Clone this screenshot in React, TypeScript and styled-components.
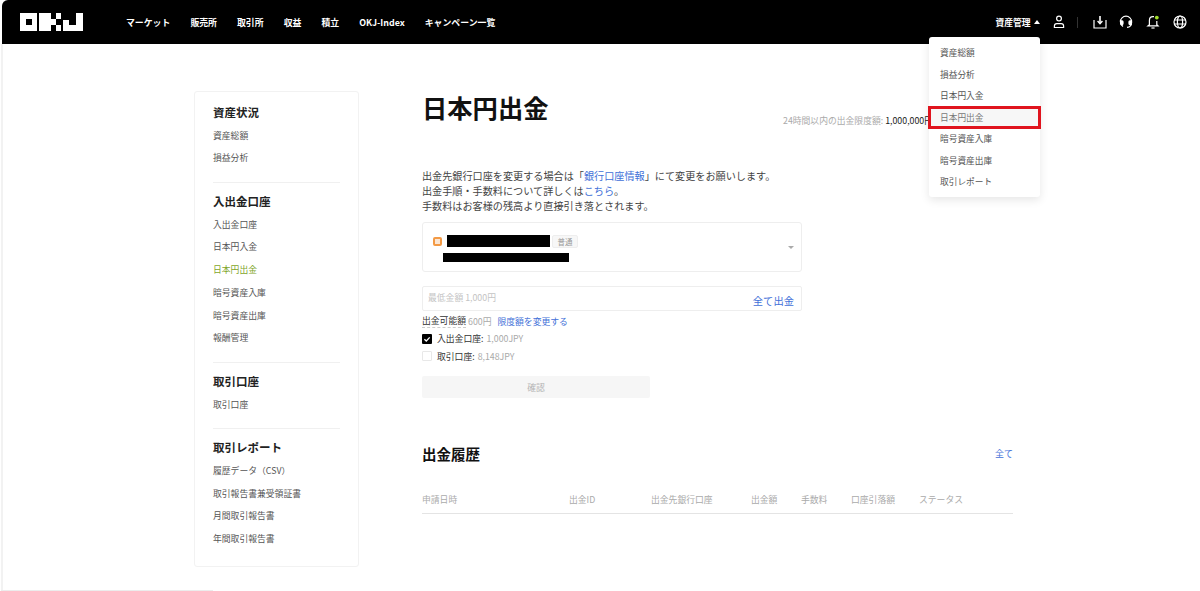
import React from 'react';
import styled, { createGlobalStyle } from 'styled-components';

const GlobalStyle = createGlobalStyle`
  html, body {
    margin: 0;
    padding: 0;
    background: #fff;
  }
  body {
    width: 1200px;
    height: 591px;
    overflow: hidden;
    font-family: "Noto Sans CJK JP", "Noto Sans", sans-serif;
    font-size: 9px;
    color: #333;
  }
  * {
    box-sizing: border-box;
  }
`;

const NAV_ITEMS = ['マーケット', '販売所', '取引所', '収益', '積立', 'OKJ-Index', 'キャンペーン一覧'];
const MENU_ITEMS = ['資産総額', '損益分析', '日本円入金', '日本円出金', '暗号資産入庫', '暗号資産出庫', '取引レポート'];
const SIDE_GROUPS = [
  { title: '資産状況', items: ['資産総額', '損益分析'] },
  { title: '入出金口座', items: ['入出金口座', '日本円入金', '日本円出金', '暗号資産入庫', '暗号資産出庫', '報酬管理'] },
  { title: '取引口座', items: ['取引口座'] },
  { title: '取引レポート', items: ['履歴データ（CSV）', '取引報告書兼受領証書', '月間取引報告書', '年間取引報告書'] },
];
const COLUMNS = ['申請日時', '出金ID', '出金先銀行口座', '出金額', '手数料', '口座引落額', 'ステータス'];

const Logo = () => (
  <LogoSvg viewBox="0 0 63 18" aria-label="OKJ">
    <path fill="#fff" fillRule="evenodd" d="M0 0h17v18H0zM6 6v6h6V6z" />
    <path fill="#fff" d="M19 0h12v18H19zM31 6h5v6h-5zM36 0h5v6h-5zM36 12h5v6h-5z" />
    <path fill="#fff" d="M56 0h7v18H43V7h6v5h7z" />
  </LogoSvg>
);

const UserIcon = () => (
  <IconSvg viewBox="0 0 14 14">
    <circle cx="7" cy="3.6" r="2.4" />
    <path d="M2.4 12.5h9.2v-1.4c0-1.4-1.2-2.4-2.4-2.4H4.8c-1.2 0-2.4 1-2.4 2.4z" />
  </IconSvg>
);

const DownloadIcon = () => (
  <IconSvg viewBox="0 0 14 14">
    <path d="M1 5v8h12V5" />
    <path d="M7 1v7" strokeWidth="1.6" />
    <path d="M4.6 6l2.4 2.6L9.4 6" strokeWidth="1.4" />
  </IconSvg>
);

const HeadsetIcon = () => (
  <IconSvg viewBox="0 0 14 14" strokeWidth="1.7">
    <path d="M4 11.4A5.7 5.7 0 0 1 1.4 6.8a5.6 5.6 0 0 1 11.2 0v.6c0 2.6-1.6 4.6-4.6 5" />
    <rect x="1.6" y="5.8" width="2.4" height="3.8" rx="1" fill="#fff" />
    <rect x="10" y="5.8" width="2.4" height="3.8" rx="1" fill="#fff" />
  </IconSvg>
);

const BellIcon = () => (
  <IconSvg viewBox="0 0 14 14" strokeWidth="1.4">
    <path d="M8 1.7H7C4.8 1.7 3.4 3.2 3.4 5.4v4.3L2 10.8h10l-1.2-1.1V6" />
    <path d="M5.4 13h3.2" />
    <circle cx="10.8" cy="2.6" r="1.9" fill="#9fdc2a" stroke="none" />
  </IconSvg>
);

const GlobeIcon = () => (
  <IconSvg viewBox="0 0 14 14" strokeWidth="1">
    <circle cx="7" cy="7" r="6" />
    <ellipse cx="7" cy="7" rx="2.6" ry="6" />
    <path d="M1 5h12M1 9h12" />
  </IconSvg>
);

const App = () => (
  <Frame>
    <GlobalStyle />
    <Header>
      <Logo />
      <Nav>
        {NAV_ITEMS.map((item) => (
          <NavLink key={item}>{item}</NavLink>
        ))}
      </Nav>
      <HeaderTools>
        <AssetMenu>
          資産管理
          <Caret />
        </AssetMenu>
        <UserIcon />
        <ToolDivider />
        <IconRow>
          <DownloadIcon />
          <HeadsetIcon />
          <BellIcon />
          <GlobeIcon />
        </IconRow>
      </HeaderTools>
    </Header>

    <Dropdown>
      {MENU_ITEMS.map((item) => (
        <DropdownItem key={item} $current={item === '日本円出金'}>
          {item}
        </DropdownItem>
      ))}
    </Dropdown>

    <Page>
      <Sidebar>
        {SIDE_GROUPS.map((group) => (
          <SideGroup key={group.title}>
            <SideTitle>{group.title}</SideTitle>
            {group.items.map((item) => (
              <SideItem key={item} $active={group.title === '入出金口座' && item === '日本円出金'}>
                {item}
              </SideItem>
            ))}
          </SideGroup>
        ))}
      </Sidebar>

      <Main>
        <TitleRow>
          <Title>日本円出金</Title>
          <Limit>
            24時間以内の出金限度額: <LimitValue>1,000,000円</LimitValue>
          </Limit>
        </TitleRow>

        <Notice>
          出金先銀行口座を変更する場合は「<BlueText>銀行口座情報</BlueText>」にて変更をお願いします。
          <br />
          出金手順・手数料について詳しくは<BlueText>こちら</BlueText>。
          <br />
          手数料はお客様の残高より直接引き落とされます。
        </Notice>

        <BankSelect>
          <BankInfo>
            <BankTop>
              <BankIcon />
              <Redacted $width={103} $height={12} />
              <AccountTag>普通</AccountTag>
            </BankTop>
            <BankBottom>
              <Redacted $width={126} $height={9} />
            </BankBottom>
          </BankInfo>
          <SelectCaret />
        </BankSelect>

        <AmountField>
          <Placeholder>最低金額 1,000円</Placeholder>
          <AllButton>全て出金</AllButton>
        </AmountField>

        <AvailableRow>
          <AvailableLabel>出金可能額</AvailableLabel>
          <GreyText>600円</GreyText>
          <ChangeLink>限度額を変更する</ChangeLink>
        </AvailableRow>

        <CheckRow>
          <CheckBox $checked>
            <svg viewBox="0 0 10 10" width="10" height="10">
              <path d="M2.4 5.2l1.9 1.8 3.4-3.6" fill="none" stroke="#fff" strokeWidth="1.3" />
            </svg>
          </CheckBox>
          入出金口座: <GreyText>1,000JPY</GreyText>
        </CheckRow>
        <CheckRow>
          <CheckBox />
          取引口座: <GreyText>8,148JPY</GreyText>
        </CheckRow>

        <ConfirmButton>確認</ConfirmButton>

        <HistoryHead>
          <HistoryTitle>出金履歴</HistoryTitle>
          <HistoryLink>全て</HistoryLink>
        </HistoryHead>

        <TableHead>
          {COLUMNS.map((col) => (
            <span key={col}>{col}</span>
          ))}
        </TableHead>
      </Main>
    </Page>
  </Frame>
);

const Frame = styled.div`
  position: relative;
  width: 1200px;
  height: 591px;
  padding-left: 2px;
  overflow: hidden;
  background: #fff;

  &::before {
    content: '';
    position: absolute;
    left: 1px;
    top: 44px;
    bottom: 0;
    width: 2px;
    background: #f2f2f2;
  }

  &::after {
    content: '';
    position: absolute;
    left: 1px;
    bottom: 0;
    width: 212px;
    height: 1px;
    background: #ececec;
  }
`;

const Header = styled.header`
  display: flex;
  align-items: center;
  height: 44px;
  padding: 0 13px 0 18px;
  background: #000;
  border-top-left-radius: 6px;
  color: #fff;
`;

const LogoSvg = styled.svg`
  width: 63px;
  height: 18px;
  flex-shrink: 0;
`;

const Nav = styled.nav`
  display: flex;
  gap: 20px;
  margin-left: 43px;
`;

const NavLink = styled.a`
  font-size: 8.9px;
  font-weight: 700;
  color: #fff;
  white-space: nowrap;
`;

const HeaderTools = styled.div`
  display: flex;
  align-items: center;
  margin-left: auto;
`;

const AssetMenu = styled.div`
  display: flex;
  align-items: center;
  gap: 3px;
  margin-right: 12px;
  font-size: 8.8px;
  font-weight: 700;
`;

const Caret = styled.span`
  width: 0;
  height: 0;
  border-left: 3px solid transparent;
  border-right: 3px solid transparent;
  border-bottom: 4px solid #fff;
`;

const IconSvg = styled.svg`
  width: 14px;
  height: 14px;
  fill: none;
  stroke: #fff;
  stroke-width: 1.2;
  flex-shrink: 0;
`;

const ToolDivider = styled.span`
  width: 1px;
  height: 11px;
  margin: 0 15px 0 11px;
  background: #333;
`;

const IconRow = styled.div`
  display: flex;
  align-items: center;
  gap: 12.8px;
`;

const Dropdown = styled.ul`
  position: absolute;
  z-index: 2;
  left: 929px;
  top: 37px;
  width: 111px;
  height: 160px;
  margin: 0;
  padding: 5px 0 0;
  list-style: none;
  background: #fff;
  border-radius: 3px;
  box-shadow: 0 3px 10px rgba(0, 0, 0, 0.1);
`;

const DropdownItem = styled.li<{ $current?: boolean }>`
  display: flex;
  align-items: center;
  height: 21.5px;
  padding-left: 11px;
  font-size: 8.7px;
  color: ${(p) => (p.$current ? '#777' : '#555')};
  background: ${(p) => (p.$current ? '#f7f7f7' : 'transparent')};
  outline: ${(p) => (p.$current ? '3px solid #e0141e' : 'none')};
  outline-offset: -2px;
`;

const Page = styled.div`
  display: flex;
  padding: 47px 0 0 192px;
`;

const Sidebar = styled.aside`
  flex-shrink: 0;
  width: 165px;
  height: 476px;
  padding: 13px 18px 0;
  border: 1px solid #f2f2f2;
  border-radius: 3px;
`;

const SideGroup = styled.section`
  padding: 0 0 12px;
  margin-bottom: 11px;
  border-bottom: 1px solid #f0f0f0;

  &:last-child {
    border-bottom: none;
    margin-bottom: 0;
  }
`;

const SideTitle = styled.h3`
  margin: -1px 0 4.5px;
  font-size: 11.5px;
  line-height: 16px;
  font-weight: 700;
  color: #222;
`;

const SideItem = styled.div<{ $active?: boolean }>`
  height: 22.75px;
  line-height: 22.75px;
  font-size: 8.8px;
  white-space: nowrap;
  color: ${(p) => (p.$active ? '#7fa52a' : '#555')};
`;

const Main = styled.main`
  display: flex;
  flex-direction: column;
  width: 591px;
  margin-left: 63px;
`;

const TitleRow = styled.div`
  display: flex;
  align-items: flex-end;
  height: 38px;
  margin-bottom: 39px;
`;

const Title = styled.h1`
  margin: 0 0 4px;
  font-size: 25.3px;
  line-height: 36px;
  font-weight: 700;
  color: #111;
`;

const Limit = styled.div`
  margin-left: 234.5px;
  margin-bottom: 2px;
  font-size: 8.8px;
  line-height: 12px;
  color: #aaa;
  white-space: nowrap;
`;

const LimitValue = styled.span`
  color: #222;
`;

const Notice = styled.p`
  margin: 0 0 9px;
  font-size: 10.15px;
  line-height: 15px;
  color: #444;
`;

const BlueText = styled.a`
  color: #4170d8;
`;

const BankSelect = styled.div`
  display: flex;
  align-items: center;
  justify-content: space-between;
  width: 380px;
  height: 50px;
  padding: 0 7px 0 10px;
  border: 1px solid #eee;
  border-radius: 3px;
`;

const BankInfo = styled.div`
  display: flex;
  flex-direction: column;
  gap: 5px;
  padding-top: 2px;
`;

const BankTop = styled.div`
  display: flex;
  align-items: center;
`;

const BankBottom = styled.div`
  padding-left: 10px;
`;

const BankIcon = styled.span`
  width: 9px;
  height: 9px;
  margin-right: 5px;
  background: #fbe6d3;
  border: 2px solid #f39a45;
  border-radius: 2px;
`;

const Redacted = styled.span<{ $width: number; $height: number }>`
  display: block;
  width: ${(p) => p.$width}px;
  height: ${(p) => p.$height}px;
  background: #000;
`;

const AccountTag = styled.span`
  display: flex;
  align-items: center;
  justify-content: center;
  width: 26px;
  height: 13px;
  margin-left: 2px;
  font-size: 7.5px;
  color: #999;
  background: #f7f7f7;
  border: 1px solid #eee;
  border-radius: 2px;
`;

const SelectCaret = styled.span`
  width: 0;
  height: 0;
  border-left: 3px solid transparent;
  border-right: 3px solid transparent;
  border-top: 3px solid #aaa;
`;

const AmountField = styled.div`
  display: flex;
  justify-content: space-between;
  width: 380px;
  height: 25px;
  margin-top: 14px;
  padding: 0 7px 0 5px;
  border: 1px solid #eee;
  border-radius: 2px;
`;

const Placeholder = styled.span`
  font-size: 8.8px;
  line-height: 22px;
  color: #c4c4c4;
`;

const AllButton = styled.span`
  align-self: flex-end;
  font-size: 10.3px;
  line-height: 18px;
  color: #4170d8;
`;

const AvailableRow = styled.div`
  display: flex;
  align-items: center;
  gap: 2px;
  height: 14px;
  margin-top: 3px;
  font-size: 8.8px;
`;

const AvailableLabel = styled.span`
  color: #333;
  border-bottom: 1px dashed #ccc;
  line-height: 12px;
`;

const GreyText = styled.span`
  color: #aaa;
`;

const ChangeLink = styled.a`
  margin-left: 4px;
  color: #4170d8;
`;

const CheckRow = styled.label`
  display: flex;
  align-items: center;
  gap: 3px;
  height: 17.5px;
  font-size: 8.8px;
  color: #333;

  &:first-of-type {
    margin-top: 2px;
  }
`;

const CheckBox = styled.span<{ $checked?: boolean }>`
  display: flex;
  width: 10px;
  height: 10px;
  margin-right: 2px;
  background: ${(p) => (p.$checked ? '#000' : '#fff')};
  border: ${(p) => (p.$checked ? 'none' : '1px solid #e8e8e8')};
  border-radius: 1px;
`;

const ConfirmButton = styled.button`
  width: 228px;
  height: 22px;
  margin-top: 11px;
  padding: 0;
  font-family: inherit;
  font-size: 8.8px;
  color: #b5b5b5;
  background: #f6f6f6;
  border: none;
  border-radius: 2px;
`;

const HistoryHead = styled.div`
  display: flex;
  align-items: center;
  justify-content: space-between;
  height: 20px;
  margin-top: 45px;
  font-size: 9px;
`;

const HistoryTitle = styled.h2`
  margin: 0;
  font-size: 14.5px;
  font-weight: 700;
  color: #111;
`;

const HistoryLink = styled.a`
  margin-top: 1px;
  color: #4170d8;
`;

const TableHead = styled.div`
  display: grid;
  grid-template-columns: 147px 82px 100px 50px 50px 68px 1fr;
  align-items: center;
  height: 28px;
  margin-top: 23px;
  font-size: 8.8px;
  color: #aaa;
  border-bottom: 1px solid #e4e4e4;
`;

export default App;
